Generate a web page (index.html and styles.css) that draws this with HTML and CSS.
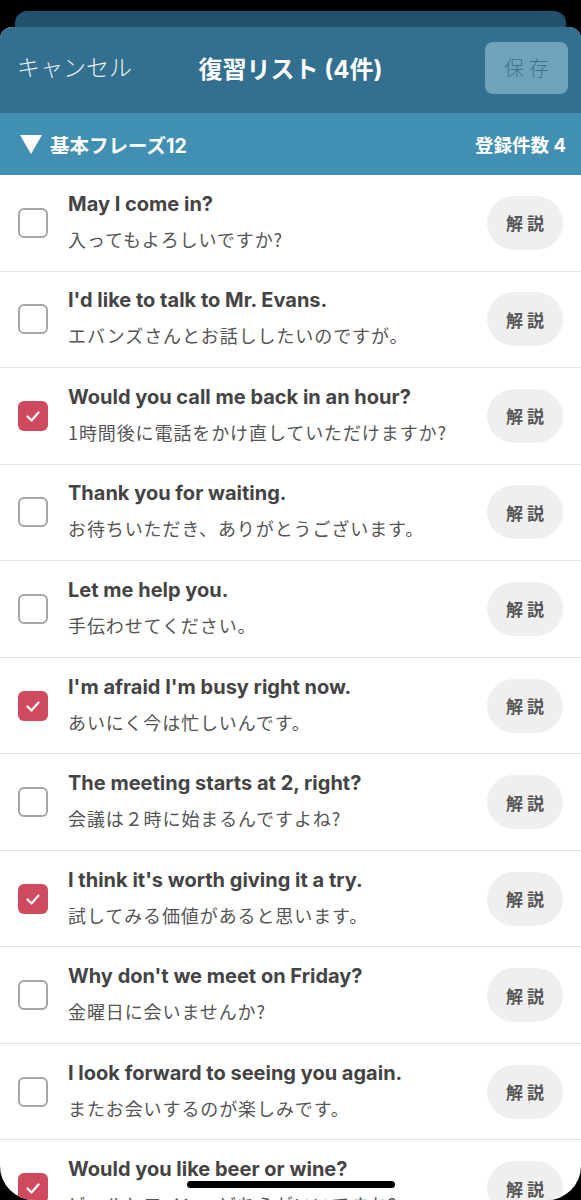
FILE: index.html
```html
<!DOCTYPE html>
<html lang="ja">

<head>
    <meta charset="UTF-8">
    <title>復習リスト</title>
    <link rel="stylesheet" href="styles.css">
</head>

<body>
    <div class="screen">
        <div class="back-card"></div>
        <div class="sheet">
            <div class="header">
                <span class="cancel">キャンセル</span>
                <span class="title">復習リスト (4件)</span>
                <span class="save">保 存</span>
            </div>
            <div class="section">
                <span class="section-name"><span class="tri"></span>基本フレーズ12</span>
                <span class="section-count">登録件数 4</span>
            </div>
            <ul class="list">
                <li class="row">
                    <span class="check"></span>
                    <div class="texts">
                        <p class="en">May I come in?</p>
                        <p class="ja">入ってもよろしいですか?</p>
                    </div>
                    <span class="explain">解 説</span>
                </li>
                <li class="row">
                    <span class="check"></span>
                    <div class="texts">
                        <p class="en">I'd like to talk to Mr. Evans.</p>
                        <p class="ja">エバンズさんとお話ししたいのですが。</p>
                    </div>
                    <span class="explain">解 説</span>
                </li>
                <li class="row">
                    <span class="check on"><svg viewBox="0 0 30 30"><path d="M9.5 15.5 L13.5 19.5 L20.5 11.5" /></svg></span>
                    <div class="texts">
                        <p class="en">Would you call me back in an hour?</p>
                        <p class="ja">1時間後に電話をかけ直していただけますか?</p>
                    </div>
                    <span class="explain">解 説</span>
                </li>
                <li class="row">
                    <span class="check"></span>
                    <div class="texts">
                        <p class="en">Thank you for waiting.</p>
                        <p class="ja">お待ちいただき、ありがとうございます。</p>
                    </div>
                    <span class="explain">解 説</span>
                </li>
                <li class="row">
                    <span class="check"></span>
                    <div class="texts">
                        <p class="en">Let me help you.</p>
                        <p class="ja">手伝わせてください。</p>
                    </div>
                    <span class="explain">解 説</span>
                </li>
                <li class="row">
                    <span class="check on"><svg viewBox="0 0 30 30"><path d="M9.5 15.5 L13.5 19.5 L20.5 11.5" /></svg></span>
                    <div class="texts">
                        <p class="en">I'm afraid I'm busy right now.</p>
                        <p class="ja">あいにく今は忙しいんです。</p>
                    </div>
                    <span class="explain">解 説</span>
                </li>
                <li class="row">
                    <span class="check"></span>
                    <div class="texts">
                        <p class="en">The meeting starts at 2, right?</p>
                        <p class="ja">会議は２時に始まるんですよね?</p>
                    </div>
                    <span class="explain">解 説</span>
                </li>
                <li class="row">
                    <span class="check on"><svg viewBox="0 0 30 30"><path d="M9.5 15.5 L13.5 19.5 L20.5 11.5" /></svg></span>
                    <div class="texts">
                        <p class="en">I think it's worth giving it a try.</p>
                        <p class="ja">試してみる価値があると思います。</p>
                    </div>
                    <span class="explain">解 説</span>
                </li>
                <li class="row">
                    <span class="check"></span>
                    <div class="texts">
                        <p class="en">Why don't we meet on Friday?</p>
                        <p class="ja">金曜日に会いませんか?</p>
                    </div>
                    <span class="explain">解 説</span>
                </li>
                <li class="row">
                    <span class="check"></span>
                    <div class="texts">
                        <p class="en">I look forward to seeing you again.</p>
                        <p class="ja">またお会いするのが楽しみです。</p>
                    </div>
                    <span class="explain">解 説</span>
                </li>
                <li class="row">
                    <span class="check on"><svg viewBox="0 0 30 30"><path d="M9.5 15.5 L13.5 19.5 L20.5 11.5" /></svg></span>
                    <div class="texts">
                        <p class="en">Would you like beer or wine?</p>
                        <p class="ja">ビールとワイン、どちらがいいですか?</p>
                    </div>
                    <span class="explain">解 説</span>
                </li>
            </ul>
        </div>
        <div class="home-bar"></div>
    </div>
</body>

</html>
```

FILE: styles.css
```css
html,
body {
    margin: 0;
    padding: 0;
    background-color: #000;
}

body {
    font-family: Inter, "Noto Sans CJK JP", sans-serif;
}

.screen {
    position: relative;
    width: 581px;
    height: 1200px;
    overflow: hidden;
    border-radius: 0 0 34px 34px;
    background-color: #000;
    padding-top: 11px;
    box-sizing: border-box;
}

.back-card {
    margin: 0 15px;
    height: 28px;
    background-color: #22526b;
    border-radius: 12px 12px 0 0;
}

.sheet {
    margin-top: -12px;
    background-color: #fff;
    border-radius: 12px 12px 0 0;
    overflow: hidden;
}

.header {
    display: grid;
    grid-template-columns: 1fr auto 1fr;
    align-items: center;
    height: 86px;
    padding: 0 13px 5px 17px;
    box-sizing: border-box;
    background-color: #33708f;
}

.cancel {
    font-size: 23px;
    color: #e9f0f4;
    font-family: "Noto Sans CJK JP", sans-serif;
    font-weight: 300;
    margin-top: -4px;
}

.title {
    text-align: center;
    font-size: 24px;
    font-weight: 700;
    color: #fff;
    padding-right: 4px;
}

.save {
    justify-self: end;
    width: 83px;
    height: 52px;
    display: flex;
    align-items: center;
    justify-content: center;
    border-radius: 8px;
    background-color: #6fa3bb;
    color: #3a7390;
    font-size: 20px;
    font-family: "Noto Sans CJK JP", sans-serif;
    font-weight: 300;
}

.section {
    display: flex;
    align-items: center;
    justify-content: space-between;
    height: 62px;
    padding: 0 15px 0 20px;
    background-color: #4190b4;
    color: #fff;
    font-weight: 700;
}

.section-name {
    display: flex;
    align-items: center;
    font-size: 19.5px;
}

.tri {
    width: 0;
    height: 0;
    border-left: 11px solid transparent;
    border-right: 11px solid transparent;
    border-top: 19px solid #fff;
    margin-right: 8px;
}

.section-count {
    font-size: 18.5px;
}

.list {
    list-style: none;
    margin: 0;
    padding: 0;
}

.row {
    display: flex;
    align-items: center;
    height: 96.55px;
    box-sizing: border-box;
    border-bottom: 1px solid #e2e2e2;
    padding: 0 18px 0 18px;
}

.check {
    width: 30px;
    height: 30px;
    box-sizing: border-box;
    border: 2.5px solid #a5a5a5;
    border-radius: 6px;
    flex-shrink: 0;
}

.check.on {
    border: none;
    background-color: #d04a5f;
}

.check svg {
    display: block;
    width: 30px;
    height: 30px;
}

.check path {
    fill: none;
    stroke: #fff;
    stroke-width: 2.2;
    stroke-linecap: round;
    stroke-linejoin: round;
}

.texts {
    flex: 1;
    padding-left: 20px;
    margin-top: -2px;
}

.en {
    margin: 0;
    font-size: 20px;
    font-weight: 700;
    color: #444;
    line-height: 24px;
}

.ja {
    margin: 10px 0 0;
    font-size: 18px;
    letter-spacing: 0.9px;
    line-height: 26px;
    color: #555;
    font-family: "Noto Sans CJK JP", sans-serif;
}

.explain {
    width: 76px;
    height: 54px;
    display: flex;
    align-items: center;
    justify-content: center;
    border-radius: 27px;
    background-color: #efefef;
    color: #555;
    font-size: 17px;
    font-weight: 700;
    font-family: "Noto Sans CJK JP", sans-serif;
    flex-shrink: 0;
}

.home-bar {
    position: absolute;
    left: 187px;
    bottom: 12px;
    width: 208px;
    height: 7px;
    border-radius: 4px;
    background-color: #000;
}
```
